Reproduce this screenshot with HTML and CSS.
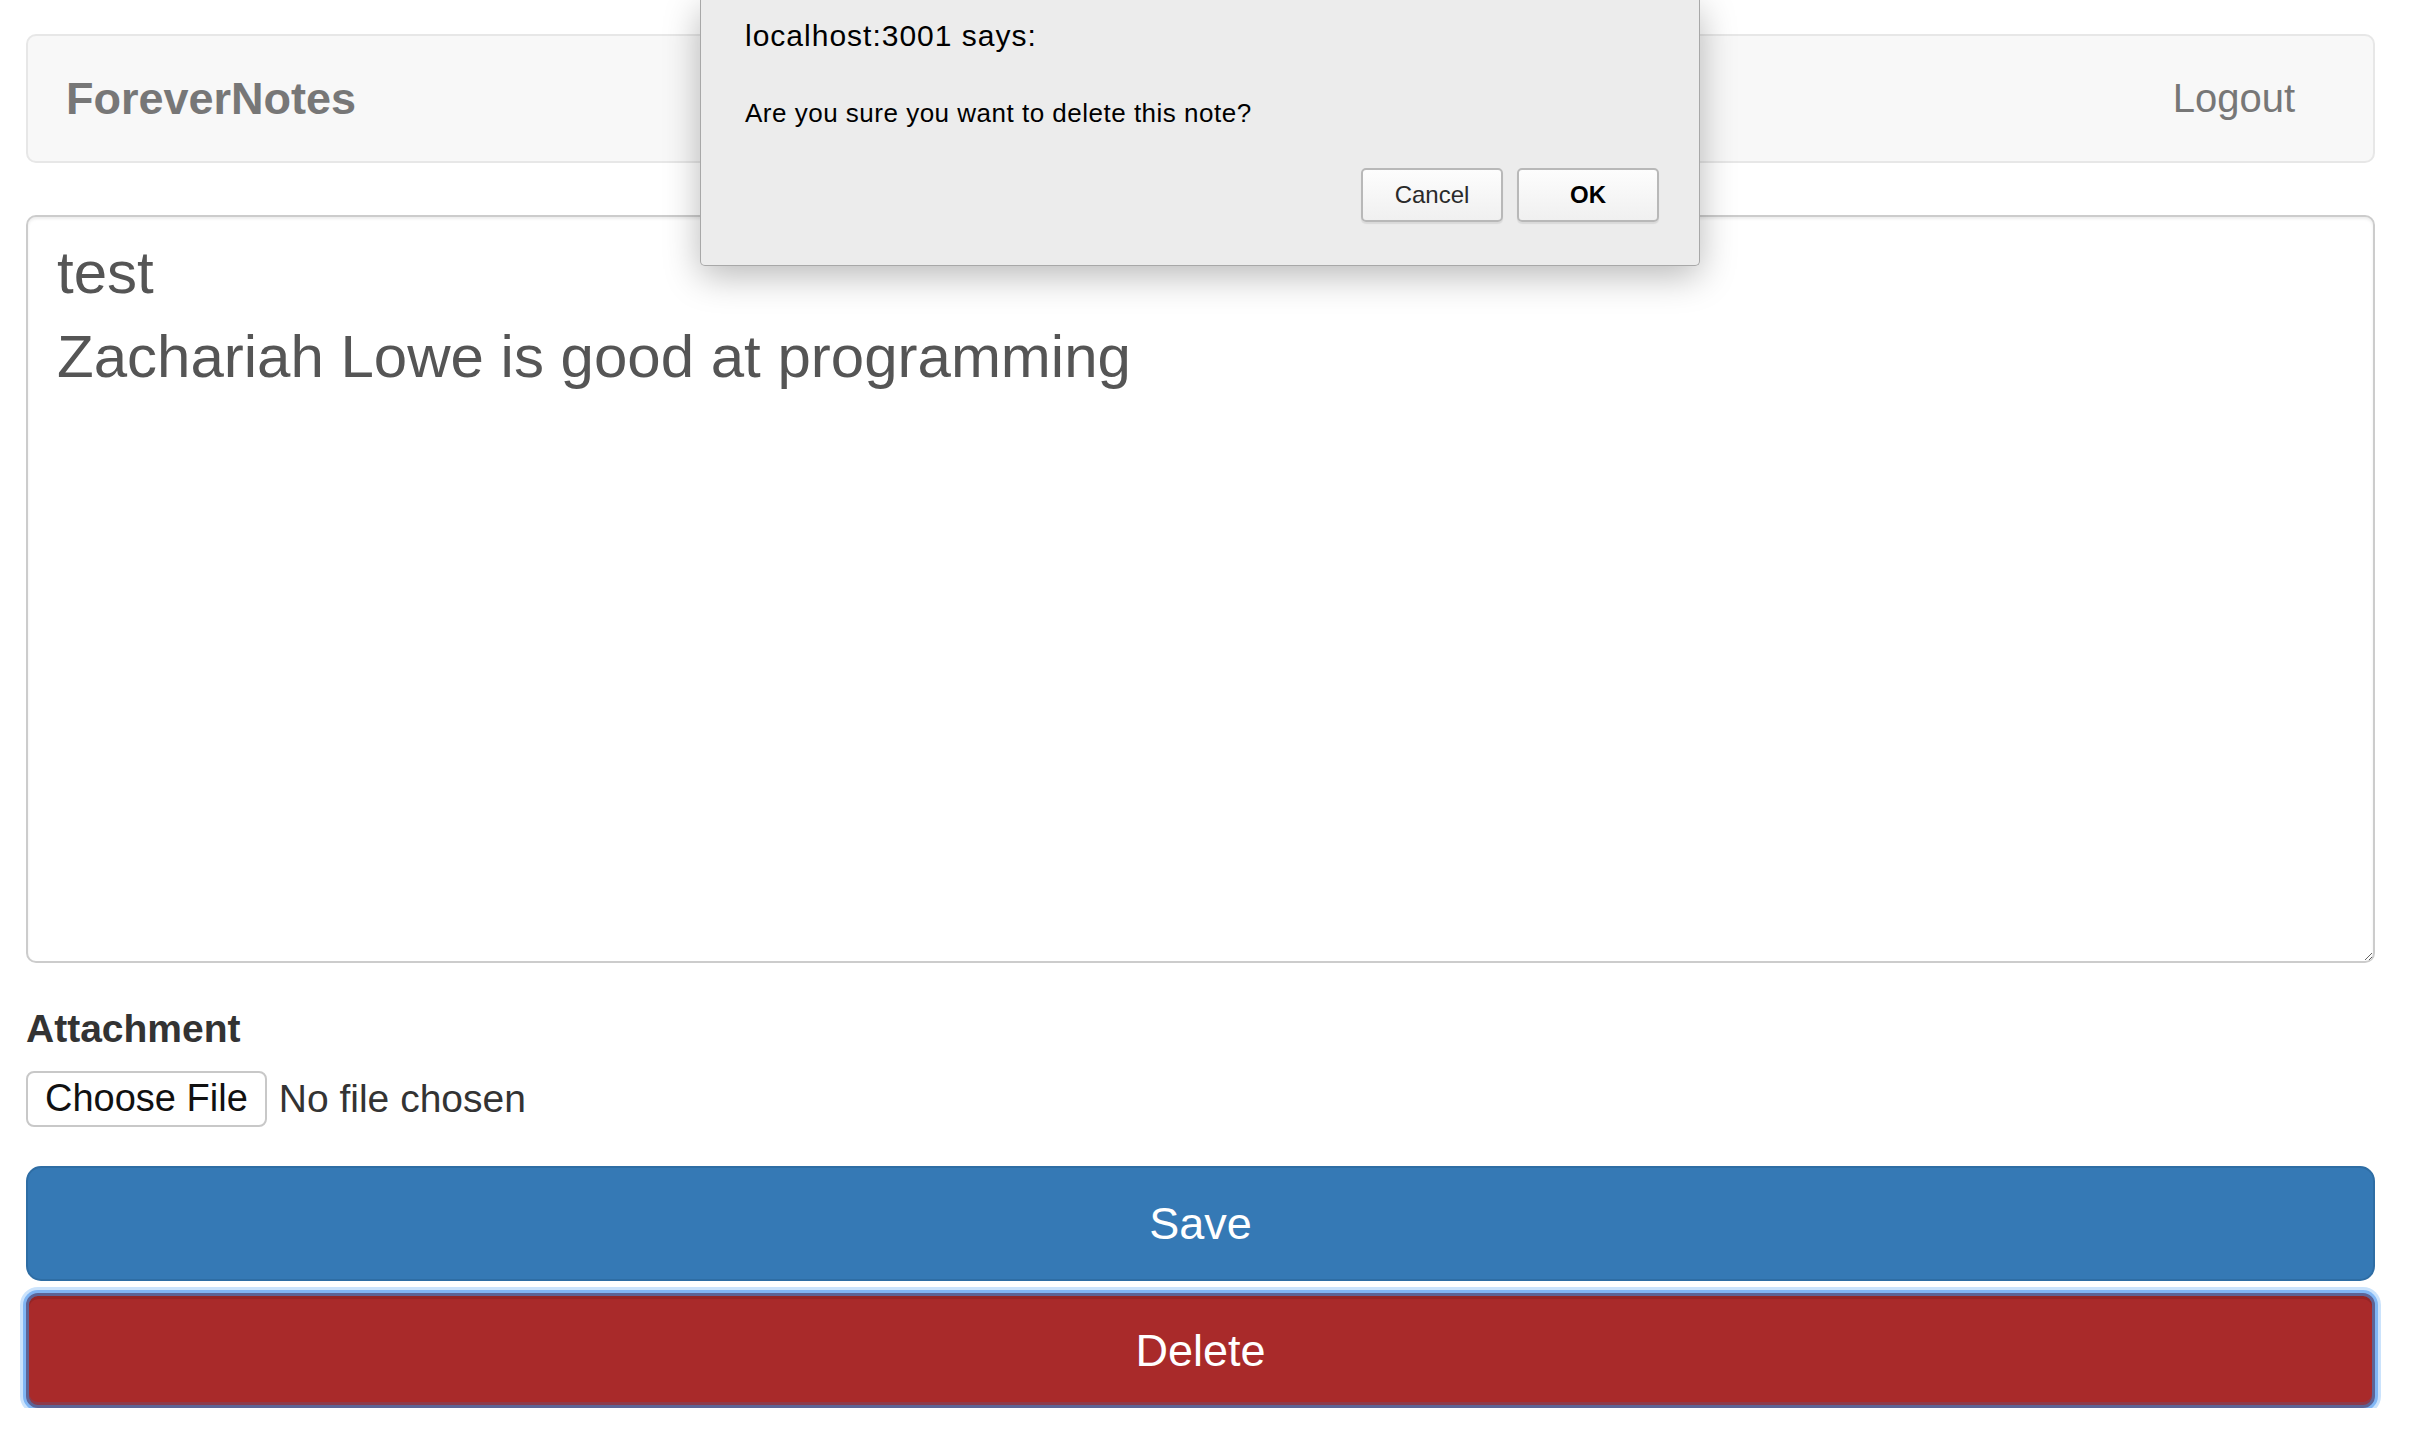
FILE: index.html
```html
<!doctype html>
<html>
  <head>
    <meta charset="utf-8">
    <title>ForeverNotes</title>
    <link rel="stylesheet" href="styles.css">
  </head>
  <body>
    <div class="page">
      <nav class="navbar">
        <span class="brand">ForeverNotes</span>
        <a class="logout" href="#">Logout</a>
      </nav>

      <form class="note-form">
        <textarea class="note-content">test
Zachariah Lowe is good at programming</textarea>

        <label class="attach-label" for="file">Attachment</label>
        <div class="file-row" id="file">
          <span class="file-btn">Choose File</span>
          <span class="file-name">No file chosen</span>
        </div>

        <button type="button" class="btn btn-save">Save</button>
        <button type="button" class="btn btn-delete">Delete</button>
      </form>
    </div>

    <div class="alert" role="dialog">
      <p class="alert-title">localhost:3001 says:</p>
      <p class="alert-msg">Are you sure you want to delete this note?</p>
      <div class="alert-actions">
        <button type="button" class="alert-btn">Cancel</button>
        <button type="button" class="alert-btn alert-ok">OK</button>
      </div>
    </div>
  </body>
</html>
```

FILE: styles.css
```css
html {
  box-sizing: border-box;
}

*, *:before, *:after {
  box-sizing: inherit;
}

body {
  background: #fff;
  color: #333;
  font-family: "Liberation Sans", Arial, sans-serif;
  margin: 0;
}

.page {
  padding: 34px 41px 0 26px;
}

.navbar {
  align-items: center;
  background: #f8f8f8;
  border: 2px solid #e7e7e7;
  border-radius: 10px;
  display: flex;
  height: 129px;
  justify-content: space-between;
  margin-bottom: 52px;
  padding: 0 78px 0 38px;
}

.brand {
  color: #777;
  font-size: 45px;
  font-weight: bold;
}

.logout {
  color: #777;
  font-size: 40px;
  text-decoration: none;
}

.note-form {
  display: flex;
  flex-direction: column;
}

.note-content {
  border: 2px solid #ccc;
  border-radius: 10px;
  box-shadow: inset 0 2px 3px rgba(0, 0, 0, 0.075);
  color: #555;
  display: block;
  font-family: "Liberation Sans", Arial, sans-serif;
  font-size: 60px;
  height: 748px;
  line-height: 84px;
  outline: none;
  padding: 14px 29px 13px;
  width: 100%;
}

.attach-label {
  color: #333;
  display: block;
  font-size: 39px;
  font-weight: bold;
  line-height: 50px;
  margin-top: 41px;
}

.file-row {
  align-items: center;
  display: flex;
  margin-top: 17px;
}

.file-btn {
  background: #fff;
  border: 2px solid #c8c8c8;
  border-radius: 8px;
  color: #111;
  font-size: 38px;
  height: 56px;
  line-height: 50px;
  padding: 0 17px;
}

.file-name {
  color: #333;
  font-size: 39px;
  margin-left: 12px;
}

.btn {
  border: 2px solid transparent;
  border-radius: 15px;
  color: #fff;
  cursor: pointer;
  display: block;
  font-family: "Liberation Sans", Arial, sans-serif;
  font-size: 45px;
  height: 115px;
  padding: 0;
  width: 100%;
}

.btn-save {
  background: #3579b5;
  border-color: #2e6da4;
  margin-top: 39px;
}

.btn-delete {
  background: #a92a2a;
  border: 3px solid #5d6496;
  border-radius: 12px;
  box-shadow: inset 0 3px 0 #952627, inset 0 -3px 0 #8e3a4a, 0 0 0 3px #80b6f5, 0 0 0 6px #cbe3fc;
  margin-top: 12px;
}

/* native confirm() box */
.alert {
  background: #ececec;
  border: 1px solid #a8a8a8;
  border-radius: 0 0 5px 5px;
  border-top: none;
  box-shadow: 0 10px 36px rgba(0, 0, 0, 0.28);
  color: #000;
  left: 700px;
  padding: 18px 40px 43px 44px;
  position: absolute;
  top: 0;
  width: 1000px;
}

.alert p {
  margin: 0;
}

.alert-title {
  font-size: 30px;
  letter-spacing: 1px;
  line-height: 36px;
}

.alert-msg {
  font-size: 26px;
  letter-spacing: 0.5px;
  line-height: 30px;
  margin-top: 44px !important;
}

.alert-actions {
  display: flex;
  gap: 14px;
  justify-content: flex-end;
  margin-top: 40px;
}

.alert-btn {
  background: linear-gradient(#fdfdfd, #f0f0f0);
  border: 2px solid #b8b8b8;
  border-radius: 5px;
  box-shadow: 0 2px 1px rgba(0, 0, 0, 0.08);
  color: #2a2a2a;
  font-family: "Liberation Sans", Arial, sans-serif;
  font-size: 24px;
  height: 54px;
  padding: 0;
  width: 142px;
}

.alert-ok {
  color: #000;
  font-weight: bold;
}
```
